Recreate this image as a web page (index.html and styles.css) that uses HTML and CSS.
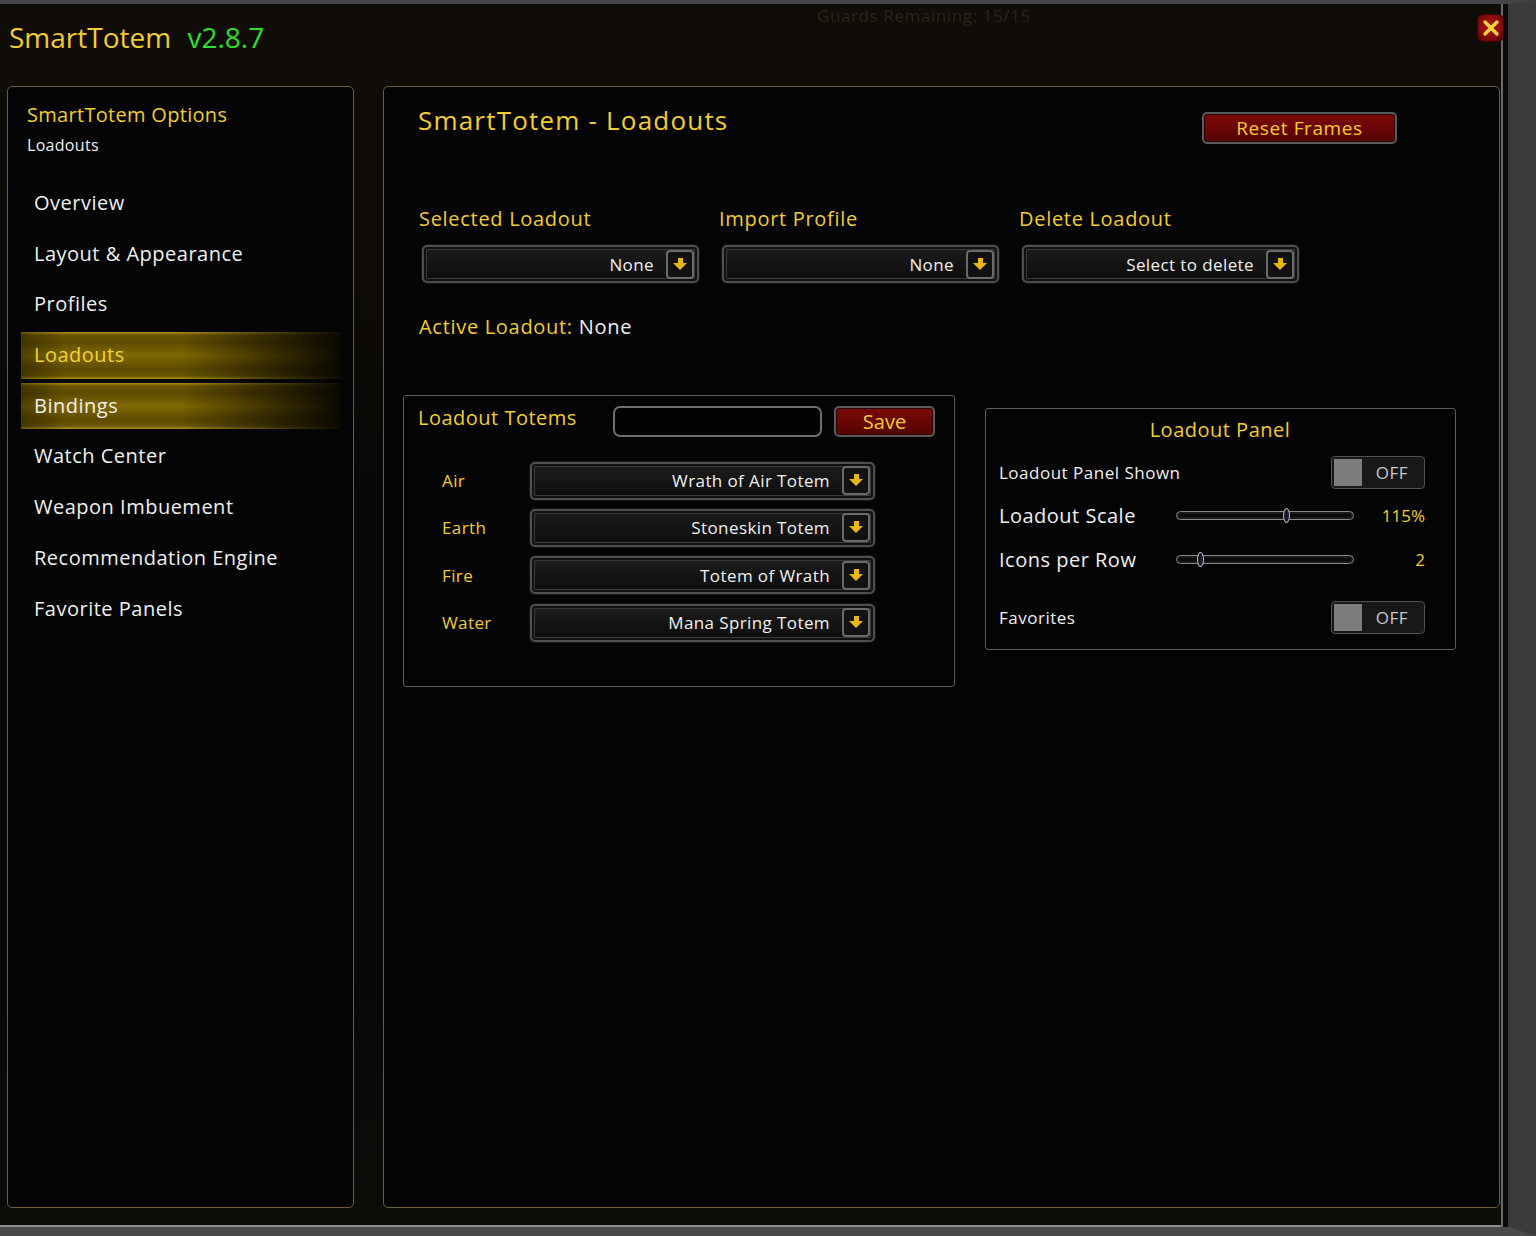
FILE: index.html
```html
<!DOCTYPE html>
<html lang="en">
<head>
  <meta charset="UTF-8" />
  <title>SmartTotem - Loadouts</title>
  <link rel="stylesheet" href="styles.css">
</head>
<body>
  <div class="window">

    <!-- faint game UI behind the frame -->
    <div class="bg-hint">Guards Remaining: 15/15</div>

    <!-- Title -->
    <header class="title-bar">
      <span class="addon-name">SmartTotem</span>
      <span class="addon-version">v2.8.7</span>
    </header>

    <button class="close-btn" aria-label="Close">
      <svg width="18" height="18" viewBox="0 0 18 18">
        <path d="M3 3 L15 15 M15 3 L3 15" stroke="#f2d43a" stroke-width="3.4" stroke-linecap="round"/>
      </svg>
    </button>

    <div class="content">

      <!-- Sidebar -->
      <aside class="sidebar">
        <div class="side-head">
          <div class="side-title">SmartTotem Options</div>
          <div class="side-sub">Loadouts</div>
        </div>
        <ul class="nav">
          <li>Overview</li>
          <li>Layout &amp; Appearance</li>
          <li>Profiles</li>
          <li class="active">Loadouts</li>
          <li class="hover">Bindings</li>
          <li>Watch Center</li>
          <li>Weapon Imbuement</li>
          <li>Recommendation Engine</li>
          <li>Favorite Panels</li>
        </ul>
      </aside>

      <!-- Main -->
      <main class="main">
        <div class="main-head">
          <h1>SmartTotem - Loadouts</h1>
          <button class="red-btn reset-btn">Reset Frames</button>
        </div>

        <div class="select-row">
          <div class="select-col">
            <div class="field-label">Selected Loadout</div>
            <div class="dropdown"><span>None</span><i class="arrow"></i></div>
          </div>
          <div class="select-col">
            <div class="field-label">Import Profile</div>
            <div class="dropdown"><span>None</span><i class="arrow"></i></div>
          </div>
          <div class="select-col">
            <div class="field-label">Delete Loadout</div>
            <div class="dropdown"><span>Select to delete</span><i class="arrow"></i></div>
          </div>
        </div>

        <div class="active-line"><span class="gold">Active Loadout:</span> None</div>

        <div class="boxes">
          <section class="box totems">
            <div class="totems-head">
              <h2>Loadout Totems</h2>
              <div class="name-input"></div>
              <button class="red-btn save-btn">Save</button>
            </div>
            <div class="totem-row">
              <span class="element">Air</span>
              <div class="dropdown wide"><span>Wrath of Air Totem</span><i class="arrow"></i></div>
            </div>
            <div class="totem-row">
              <span class="element">Earth</span>
              <div class="dropdown wide"><span>Stoneskin Totem</span><i class="arrow"></i></div>
            </div>
            <div class="totem-row">
              <span class="element">Fire</span>
              <div class="dropdown wide"><span>Totem of Wrath</span><i class="arrow"></i></div>
            </div>
            <div class="totem-row">
              <span class="element">Water</span>
              <div class="dropdown wide"><span>Mana Spring Totem</span><i class="arrow"></i></div>
            </div>
          </section>

          <section class="box panel">
            <h2 class="panel-title">Loadout Panel</h2>
            <div class="toggle-row">
              <span class="small-label">Loadout Panel Shown</span>
              <div class="toggle"><b></b><span>OFF</span></div>
            </div>
            <div class="slider-row first">
              <span class="big-label">Loadout Scale</span>
              <div class="slider"><i class="thumb" style="left: 62%"></i></div>
              <span class="value">115%</span>
            </div>
            <div class="slider-row">
              <span class="big-label">Icons per Row</span>
              <div class="slider"><i class="thumb" style="left: 13%"></i></div>
              <span class="value">2</span>
            </div>
            <div class="toggle-row last">
              <span class="small-label">Favorites</span>
              <div class="toggle"><b></b><span>OFF</span></div>
            </div>
          </section>
        </div>
      </main>
    </div>
  </div>
</body>
</html>
```

FILE: styles.css
```css
/* Reset & Base */
* {
  margin: 0;
  padding: 0;
  box-sizing: border-box;
}

body, html {
  width: 1536px;
  height: 1236px;
  overflow: hidden;
  background-color: #000;
  font-family: 'Open Sans', 'DejaVu Sans', sans-serif;
  color: #f0f0f0;
}

.gold {
  color: #f2cd32;
}

.window {
  position: relative;
  width: 1536px;
  height: 1236px;
  background: linear-gradient(to bottom, #100c08 0%, #0a0806 40%, #090806 80%, #0d0c09 100%);
  border-top: 4px solid #454545;
  border-right: 28px solid #3b3b3b;
  border-bottom: 9px solid #4a4a4a;
  box-shadow: inset -5px 0 0 #0a0a0a, inset -7px 0 0 #6a6a6a, inset 0 -2px 0 #8a8a8a;
}

.bg-hint {
  position: absolute;
  top: 0;
  left: 817px;
  font-size: 17px;
  color: #2a2516;
  letter-spacing: 0.6px;
}

/* Title */
.title-bar {
  height: 82px;
  padding: 15px 0 0 9px;
  line-height: 36px;
  font-size: 28px;
}

.addon-name {
  color: #f2cd32;
  margin-right: 9px;
}

.addon-version {
  color: #2ce02c;
}

.close-btn {
  position: absolute;
  top: 10px;
  left: 1477px;
  width: 27px;
  height: 28px;
  border: 1px solid #3a0505;
  border-radius: 6px;
  background: radial-gradient(circle at 50% 45%, #b01818 0%, #7a0808 70%, #4a0404 100%);
  display: flex;
  align-items: center;
  justify-content: center;
}

/* Columns */
.content {
  display: flex;
  gap: 29px;
  padding-left: 7px;
  height: 1122px;
}

.sidebar {
  width: 347px;
  border: 1px solid #6d6038;
  border-radius: 5px;
  background-color: #040404;
}

.side-head {
  padding: 14px 0 0 19px;
}

.side-title {
  color: #f2cd32;
  font-size: 20px;
  line-height: 28px;
  letter-spacing: 0.3px;
}

.side-sub {
  font-size: 16px;
  line-height: 32px;
  letter-spacing: 0.3px;
}

.nav {
  list-style: none;
  margin: 19px 13px 0;
  display: flex;
  flex-direction: column;
  gap: 4px;
}

.nav li {
  height: 46.7px;
  line-height: 46px;
  padding-left: 13px;
  font-size: 20px;
  letter-spacing: 0.5px;
}

.nav li.active,
.nav li.hover {
  background:
    linear-gradient(to right, rgba(0,0,0,0.35) 0%, rgba(0,0,0,0) 14%, rgba(0,0,0,0) 50%, rgba(0,0,0,0.55) 80%, rgba(0,0,0,0.9) 100%),
    linear-gradient(to bottom, #b09212 0, #6a5500 3px, #5e4b00 10px, #806800 50%, #5e4b00 calc(100% - 10px), #6a5500 calc(100% - 3px), #b09212 100%);
}

.nav li.active {
  color: #f2d43a;
}

/* Main panel */
.main {
  width: 1117px;
  border: 1px solid #6d6038;
  border-radius: 5px;
  background-color: #040404;
  padding: 0 0 0 34px;
}

.main-head {
  display: flex;
  justify-content: space-between;
  align-items: flex-start;
  padding-right: 102px;
}

.main-head h1 {
  font-weight: normal;
  color: #f2cd32;
  font-size: 26px;
  line-height: 36px;
  margin-top: 15px;
  letter-spacing: 1.2px;
}

.red-btn {
  font-family: inherit;
  color: #f2cd32;
  border: 2px solid #5b5b5b;
  border-radius: 5px;
  background: linear-gradient(to bottom, #7c0808 0%, #680505 55%, #520303 100%);
  box-shadow: inset 0 0 0 1px #2a0202;
}

.reset-btn {
  width: 195px;
  height: 32px;
  margin-top: 25px;
  font-size: 19px;
  letter-spacing: 0.6px;
}

.select-row {
  display: flex;
  margin-top: 61px;
}

.select-col {
  width: 300px;
}

.field-label {
  color: #f2cd32;
  font-size: 20px;
  line-height: 28px;
  padding-left: 1px;
  letter-spacing: 0.7px;
}

.dropdown {
  display: flex;
  align-items: center;
  justify-content: flex-end;
  width: 277px;
  height: 38px;
  margin: 12px 0 0 4px;
  padding: 0 3px 0 10px;
  border: 2px solid #4e4e4e;
  border-radius: 5px;
  background: linear-gradient(to bottom, #1d1d1d 0%, #141414 50%, #0c0c0c 100%);
  box-shadow: inset 0 0 0 2px #111, inset 0 0 0 3px #3a3a3a, 0 0 0 1px #161616;
  font-size: 17px;
  letter-spacing: 0.4px;
}

.dropdown span {
  margin-right: 12px;
}

.arrow {
  display: block;
  width: 28px;
  height: 29px;
  border: 2px solid #6a6a6a;
  border-radius: 4px;
  background: #111;
  position: relative;
}

.arrow::before {
  content: "";
  position: absolute;
  left: 9.5px;
  top: 6px;
  width: 5px;
  height: 5px;
  background: #e8b812;
}

.arrow::after {
  content: "";
  position: absolute;
  left: 5px;
  top: 11px;
  border-left: 7px solid transparent;
  border-right: 7px solid transparent;
  border-top: 7px solid #e8b812;
}

.active-line {
  margin-top: 30px;
  font-size: 20px;
  line-height: 28px;
  padding-left: 1px;
  letter-spacing: 0.7px;
}

/* Lower boxes */
.boxes {
  display: flex;
  align-items: flex-start;
  gap: 30px;
  margin: 54px 0 0 -15px;
}

.box {
  border: 1px solid #5c5c5c;
  border-radius: 3px;
}

.box h2 {
  font-weight: normal;
  color: #f2cd32;
  font-size: 20px;
  letter-spacing: 0.5px;
}

.totems {
  width: 552px;
  height: 292px;
  padding: 10px 0 0 14px;
}

.totems-head {
  display: flex;
  align-items: center;
  margin-bottom: 20px;
}

.totems-head h2 {
  width: 195px;
  line-height: 26px;
  margin-top: -8px;
}

.name-input {
  width: 209px;
  height: 31px;
  border: 2px solid #6e6e6e;
  border-radius: 7px;
  background: #030303;
}

.save-btn {
  width: 101px;
  height: 31px;
  margin-left: 12px;
  font-size: 20px;
}

.totem-row {
  display: flex;
  align-items: center;
  height: 47.3px;
}

.element {
  width: 112px;
  padding-left: 24px;
  color: #f2cd32;
  font-size: 17px;
  letter-spacing: 0.4px;
}

.dropdown.wide {
  width: 345px;
  margin: 0;
}

.panel {
  width: 471px;
  height: 242px;
  margin-top: 13px;
  padding: 6px 30px 0 13px;
}

.panel-title {
  text-align: center;
  line-height: 30px;
  padding-left: 16px;
}

.toggle-row {
  display: flex;
  justify-content: space-between;
  align-items: center;
  height: 34px;
  margin-top: 10px;
}

.toggle-row.last {
  margin-top: 19px;
}

.small-label {
  font-size: 17px;
  letter-spacing: 0.5px;
}

.toggle {
  display: flex;
  align-items: center;
  width: 94px;
  height: 33px;
  padding: 2px;
  border: 1px solid #505050;
  border-radius: 4px;
  background: #181818;
}

.toggle b {
  width: 28px;
  height: 27px;
  background: #7c7c7c;
}

.toggle span {
  flex: 1;
  text-align: center;
  font-size: 17px;
  color: #c8c8c8;
  letter-spacing: 0.5px;
}

.slider-row {
  display: grid;
  grid-template-columns: 177px 178px 1fr;
  align-items: center;
  height: 44px;
}

.slider-row.first {
  margin-top: 4px;
}

.big-label {
  font-size: 20px;
  letter-spacing: 0.5px;
}

.slider {
  position: relative;
  height: 9px;
  border: 1px solid #8a8a8a;
  border-radius: 5px;
  background: #0a0a0a;
  box-shadow: inset 0 0 0 2px #1a1a1a;
}

.thumb {
  position: absolute;
  top: -4px;
  width: 7px;
  height: 15px;
  margin-left: -3px;
  border: 1px solid #b8b8c8;
  border-radius: 50%;
  background: #1a1a22;
}

.value {
  text-align: right;
  color: #f2cd32;
  font-size: 17px;
}
```
